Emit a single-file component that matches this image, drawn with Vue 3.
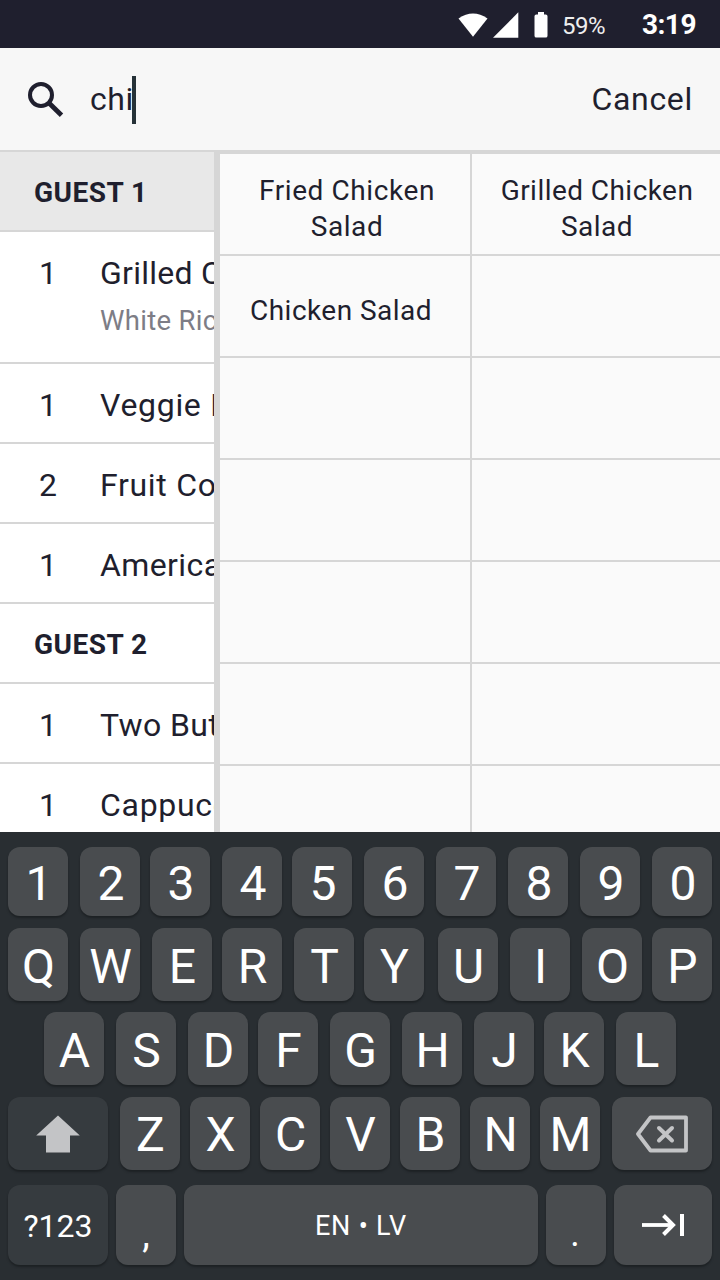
<script setup>
const order = [
  { type: 'guest', name: 'GUEST 1', active: true },
  { type: 'item', qty: 1, name: 'Grilled Chicken', note: 'White Rice', cls: 'snug' },
  { type: 'item', qty: 1, name: 'Veggie Burger', cls: 'loose' },
  { type: 'item', qty: 2, name: 'Fruit Compote', cls: 'loose' },
  { type: 'item', qty: 1, name: 'Americano' },
  { type: 'guest', name: 'GUEST 2' },
  { type: 'item', qty: 1, name: 'Two Butter Toasts' },
  { type: 'item', qty: 1, name: 'Cappuccino', cls: 'loose' },
]

const results = ['Fried Chicken Salad', 'Grilled Chicken Salad', 'Chicken Salad', ...Array(11).fill('')]

// Indexes of keys whose left gap is narrower or wider than the standard one.
const letterRows = [
  { id: 'digits', keys: '1234567890', tight: [2, 4], wide: [] },
  { id: 'top', keys: 'QWERTYUIOP', tight: [3, 5, 9], wide: [6] },
  { id: 'home', keys: 'ASDFGHJKL', tight: [3, 7], wide: [] },
]
</script>

<template>
  <div class="screen">
    <header class="status">
      <svg class="wifi" width="30" height="24" viewBox="0 0 30 24"><path d="M.5 5.5Q15-4.500 29.500 5.500L15 23.700Z" fill="#fff" /></svg>
      <svg class="signal" width="26" height="26" viewBox="0 0 26 26"><path d="M25.300 .3V25.700H0Z" fill="#fff" /></svg>
      <svg class="battery" width="14" height="26" viewBox="0 0 14 26"><path d="M4 0h6v2.500h1.700q1.800 0 1.800 1.800v19.400q0 1.900-1.800 1.900H2.300Q.5 25.600.5 23.700V4.300Q.5 2.500 2.300 2.500H4Z" fill="#fff" /></svg>
      <span class="percent">59%</span>
      <span class="clock">3:19</span>
    </header>

    <div class="search">
      <svg class="lens" width="36" height="36" viewBox="0 0 36 36" fill="none" stroke="#1f1f2e">
        <circle cx="13" cy="13" r="11" stroke-width="4" />
        <path d="M21.500 21.500L33.500 33.300" stroke-width="4.800" />
      </svg>
      <span class="query">chi</span><i class="caret"></i>
      <span class="cancel">Cancel</span>
    </div>

    <main class="content">
      <section class="order">
        <template v-for="row in order" :key="row.name">
          <div v-if="row.type === 'guest'" class="guest" :class="{ active: row.active }">{{ row.name }}</div>
          <div v-else class="item" :class="[row.cls, { noted: row.note }]">
            <span class="qty">{{ row.qty }}</span>
            <div class="desc">
              <div class="name">{{ row.name }}</div>
              <div v-if="row.note" class="note">{{ row.note }}</div>
            </div>
          </div>
        </template>
      </section>
      <section class="results">
        <div v-for="(r, i) in results" :key="i" class="cell"><span>{{ r }}</span></div>
      </section>
    </main>

    <div class="keyboard">
      <div v-for="row in letterRows" :key="row.id" class="keys" :class="row.id">
        <div
          v-for="(k, i) in row.keys"
          :key="k"
          class="key"
          :class="{ tight: row.tight.includes(i), wide: row.wide.includes(i) }"
        >{{ k }}</div>
      </div>
      <div class="keys lower">
        <div class="key side dark">
          <svg width="44" height="38" viewBox="0 0 44 38"><path d="M22 .5L43.800 20.500H34V37.500H10V20.500H.2Z" fill="#c3c4c6" /></svg>
        </div>
        <div v-for="(k, i) in 'ZXCVBNM'" :key="k" class="key" :class="{ tight: i > 0 }">{{ k }}</div>
        <div class="key side">
          <svg width="52" height="38" viewBox="0 0 52 38" fill="none" stroke="#c3c4c6" stroke-linejoin="round" stroke-linecap="round">
            <path d="M2 19L14.500 2.500H50V35.500H14.500Z" stroke-width="3.800" />
            <path d="M23 13L36 25.500M36 13L23 25.500" stroke-width="4" />
          </svg>
        </div>
      </div>
      <div class="keys bottom">
        <div class="key side dark symbols">?123</div>
        <div class="key punct">,</div>
        <div class="key space">EN • LV</div>
        <div class="key punct dot">.</div>
        <div class="key next">
          <svg width="44" height="24" viewBox="0 0 44 24" fill="none" stroke="#fff">
            <path d="M1 12H33" stroke-width="3.800" />
            <path d="M22.500 2.500L32 12L22.500 21.500" stroke-width="4" />
            <path d="M41 1V23" stroke-width="4" />
          </svg>
        </div>
      </div>
    </div>
  </div>
</template>

<style>
body {
  margin: 0;
}
</style>

<style scoped>
.screen {
  width: 720px;
  height: 1280px;
  overflow: hidden;
  display: flex;
  flex-direction: column;
  font-family: Roboto, 'Liberation Sans', sans-serif;
  color: #1f1f2e;
  background: #fff;
}
.status {
  height: 48px;
  flex: none;
  display: flex;
  align-items: center;
  box-sizing: border-box;
  padding: 1px 24px 0 0;
  background: #1f1f2e;
  color: #fff;
}
.wifi { margin-left: 458px; }
.signal { margin-left: 5px; }
.battery { margin-left: 15px; }
.percent {
  margin-left: 14px;
  font-size: 24px;
  line-height: 28px;
  padding-top: 2px;
  letter-spacing: -0.5px;
  color: #eee;
}
.clock {
  margin-left: auto;
  font-size: 28px;
  font-weight: 700;
  line-height: 32px;
  padding-top: 1px;
  letter-spacing: -0.5px;
}
.search {
  height: 104px;
  flex: none;
  box-sizing: border-box;
  border-bottom: 2px solid #d6d6d6;
  background: #f7f7f7;
  display: flex;
  align-items: center;
  padding: 0 27px 0 28px;
  font-size: 32px;
}
.lens {
  margin-top: 2px;
}
.query {
  margin-left: 26px;
  width: 42px;
  letter-spacing: 0.6px;
}
.caret {
  width: 4px;
  height: 48px;
  margin-top: 2px;
  background: #263238;
}
.cancel {
  margin-left: auto;
  letter-spacing: 0.7px;
}
.content {
  height: 680px;
  flex: none;
  display: flex;
  overflow: hidden;
}
.order {
  width: 214px;
  flex: none;
  overflow: hidden;
  border-right: 6px solid #d6d6d6;
}
.guest {
  height: 80px;
  box-sizing: border-box;
  border-bottom: 2px solid #d6d6d6;
  padding-left: 34px;
  line-height: 81px;
  font-size: 28px;
  font-weight: 700;
  letter-spacing: 0.5px;
}
.guest.active {
  background: #e8e8e8;
}
.item {
  height: 80px;
  box-sizing: border-box;
  border-bottom: 2px solid #d6d6d6;
  padding: 21px 0 0 39px;
  display: flex;
  white-space: nowrap;
  font-size: 32px;
  line-height: 40px;
}
.item.noted {
  height: 132px;
}
.qty {
  width: 61px;
  flex: none;
}
.name {
  letter-spacing: 0.4px;
}
.snug .name {
  letter-spacing: 0.25px;
}
.loose .name {
  letter-spacing: 0.7px;
}
.note {
  margin-top: 8px;
  font-size: 27.500px;
  color: #7d7d86;
  letter-spacing: 0.3px;
}
.results {
  flex: 1;
  display: grid;
  grid-template-columns: 252px 248px;
  grid-auto-rows: 102px;
  border-top: 2px solid #d6d6d6;
  background: #fafafa;
}
.cell {
  box-sizing: border-box;
  border-bottom: 2px solid #d6d6d6;
  display: flex;
  align-items: center;
  justify-content: center;
  text-align: center;
  padding: 10px 20px 0 22px;
  font-size: 28px;
  line-height: 36px;
  letter-spacing: 0.45px;
}
.cell:nth-child(odd) {
  border-right: 2px solid #d6d6d6;
  padding: 10px 28px 0 32px;
}
.cell:nth-child(3) {
  padding: 10px 32px 0 24px;
}
.cell:first-child {
  letter-spacing: 0.6px;
}
.keyboard {
  flex: 1;
  background: #292e32;
  padding-top: 15px;
  color: #fff;
}
.keys {
  display: flex;
  gap: 12px;
  padding: 0 8px;
}
.key {
  width: 60px;
  flex: none;
  display: flex;
  align-items: center;
  justify-content: center;
  box-sizing: border-box;
  border-radius: 12px;
  background: #494c4f;
  box-shadow: 0 2px 2px #1d2124;
  font-size: 48px;
  padding: 4px 0 0 1px;
}
.tight { margin-left: -2px; }
.wide { margin-left: 2px; }
.digits { height: 69px; }
.digits .key { padding-left: 2px; }
.top { height: 73px; margin-top: 12px; }
.home { height: 73px; margin-top: 11px; padding-left: 44px; }
.lower { height: 73px; margin-top: 12px; }
.lower .key { padding-top: 2px; }
.bottom { height: 80px; margin-top: 15px; gap: 8px; }
.key.side {
  width: 100px;
  padding: 0;
}
.dark { background: #363b3f; }
.key.symbols {
  font-size: 32px;
  padding-top: 2px;
}
.punct {
  font-size: 38px;
  padding: 18px 0 0;
}
.punct.dot {
  font-size: 36px;
  padding: 18px 2px 0 0;
}
.space {
  width: 354px;
  font-size: 27px;
  letter-spacing: 0.8px;
  padding: 2px 0 0;
}
.next {
  width: 98px;
  padding: 0;
}
</style>
